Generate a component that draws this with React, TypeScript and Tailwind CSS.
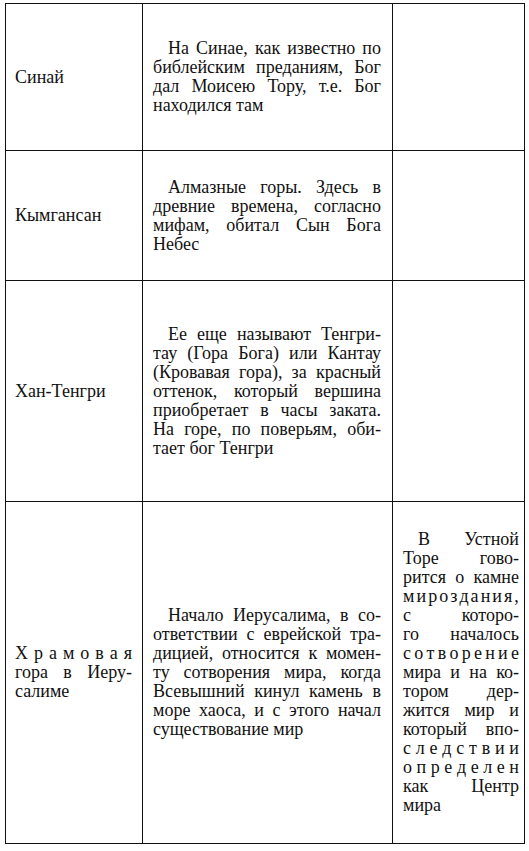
import React from "react";

type L = { t: string; s?: boolean };

function Para({ lines, indent = true }: { lines: L[]; indent?: boolean }) {
  return (
    <div className="w-full">
      {lines.map((l, i) => {
        const last = i === lines.length - 1;
        const first = i === 0 && indent;
        if (l.s) {
          return (
            <div key={i} className={`flex justify-between h-[19px] ${first ? "pl-[15px]" : ""}`}>
              {Array.from(l.t).map((c, j) => (
                <span key={j}>{c}</span>
              ))}
            </div>
          );
        }
        return (
          <p
            key={i}
            className={`h-[19px] whitespace-nowrap ${first ? "indent-[15px]" : ""} ${
              last ? "text-left" : "text-justify [text-align-last:justify]"
            }`}
          >
            {l.t}
          </p>
        );
      })}
    </div>
  );
}

const rows: { h: string; name: L[]; desc: L[]; extra?: L[] }[] = [
  {
    h: "h-[147px]",
    name: [{ t: "Синай" }],
    desc: [
      { t: "На Синае, как известно по" },
      { t: "библейским преданиям, Бог" },
      { t: "дал Моисею Тору, т.е. Бог" },
      { t: "находился там" },
    ],
  },
  {
    h: "h-[130px]",
    name: [{ t: "Кымгансан" }],
    desc: [
      { t: "Алмазные горы. Здесь в" },
      { t: "древние времена, согласно" },
      { t: "мифам, обитал Сын Бога" },
      { t: "Небес" },
    ],
  },
  {
    h: "h-[221px]",
    name: [{ t: "Хан-Тенгри" }],
    desc: [
      { t: "Ее еще называют Тенгри-" },
      { t: "тау (Гора Бога) или Кантау" },
      { t: "(Кровавая гора), за красный" },
      { t: "оттенок, который вершина" },
      { t: "приобретает в часы заката." },
      { t: "На горе, по поверьям, оби-" },
      { t: "тает бог Тенгри" },
    ],
  },
  {
    h: "h-[342px]",
    name: [{ t: "Храмовая", s: true }, { t: "гора в Иеру-" }, { t: "салиме" }],
    desc: [
      { t: "Начало Иерусалима, в со-" },
      { t: "ответствии с еврейской тра-" },
      { t: "дицией, относится к момен-" },
      { t: "ту сотворения мира, когда" },
      { t: "Всевышний кинул камень в" },
      { t: "море хаоса, и с этого начал" },
      { t: "существование мир" },
    ],
    extra: [
      { t: "В Устной" },
      { t: "Торе гово-" },
      { t: "рится о камне" },
      { t: "мироздания,", s: true },
      { t: "с которо-" },
      { t: "го началось" },
      { t: "сотворение", s: true },
      { t: "мира и на ко-" },
      { t: "тором дер-" },
      { t: "жится мир и" },
      { t: "который впо-" },
      { t: "следствии", s: true },
      { t: "определен", s: true },
      { t: "как Центр" },
      { t: "мира" },
    ],
  },
];

export default function App() {
  return (
    <div className="w-[529px] h-[851px] bg-white pt-[3px] pl-[5px] font-['Liberation_Serif',serif] text-[18px] leading-[19px] text-[#111]">
      <div className="w-[520px] border-l border-t border-[#111]">
        {rows.map((r, i) => (
          <div key={i} className={`flex ${r.h}`}>
            <div className="w-[137px] shrink-0 border-r border-b border-[#111] flex items-center pl-[9px] pr-[10px]">
              <Para lines={r.name} indent={false} />
            </div>
            <div className="w-[250px] shrink-0 border-r border-b border-[#111] flex items-center pl-[10px] pr-[11px]">
              <Para lines={r.desc} />
            </div>
            <div className="w-[132px] shrink-0 border-r border-b border-[#111] flex items-center pl-[10px] pr-[5px]">
              {r.extra ? <Para lines={r.extra} /> : null}
            </div>
          </div>
        ))}
      </div>
    </div>
  );
}
